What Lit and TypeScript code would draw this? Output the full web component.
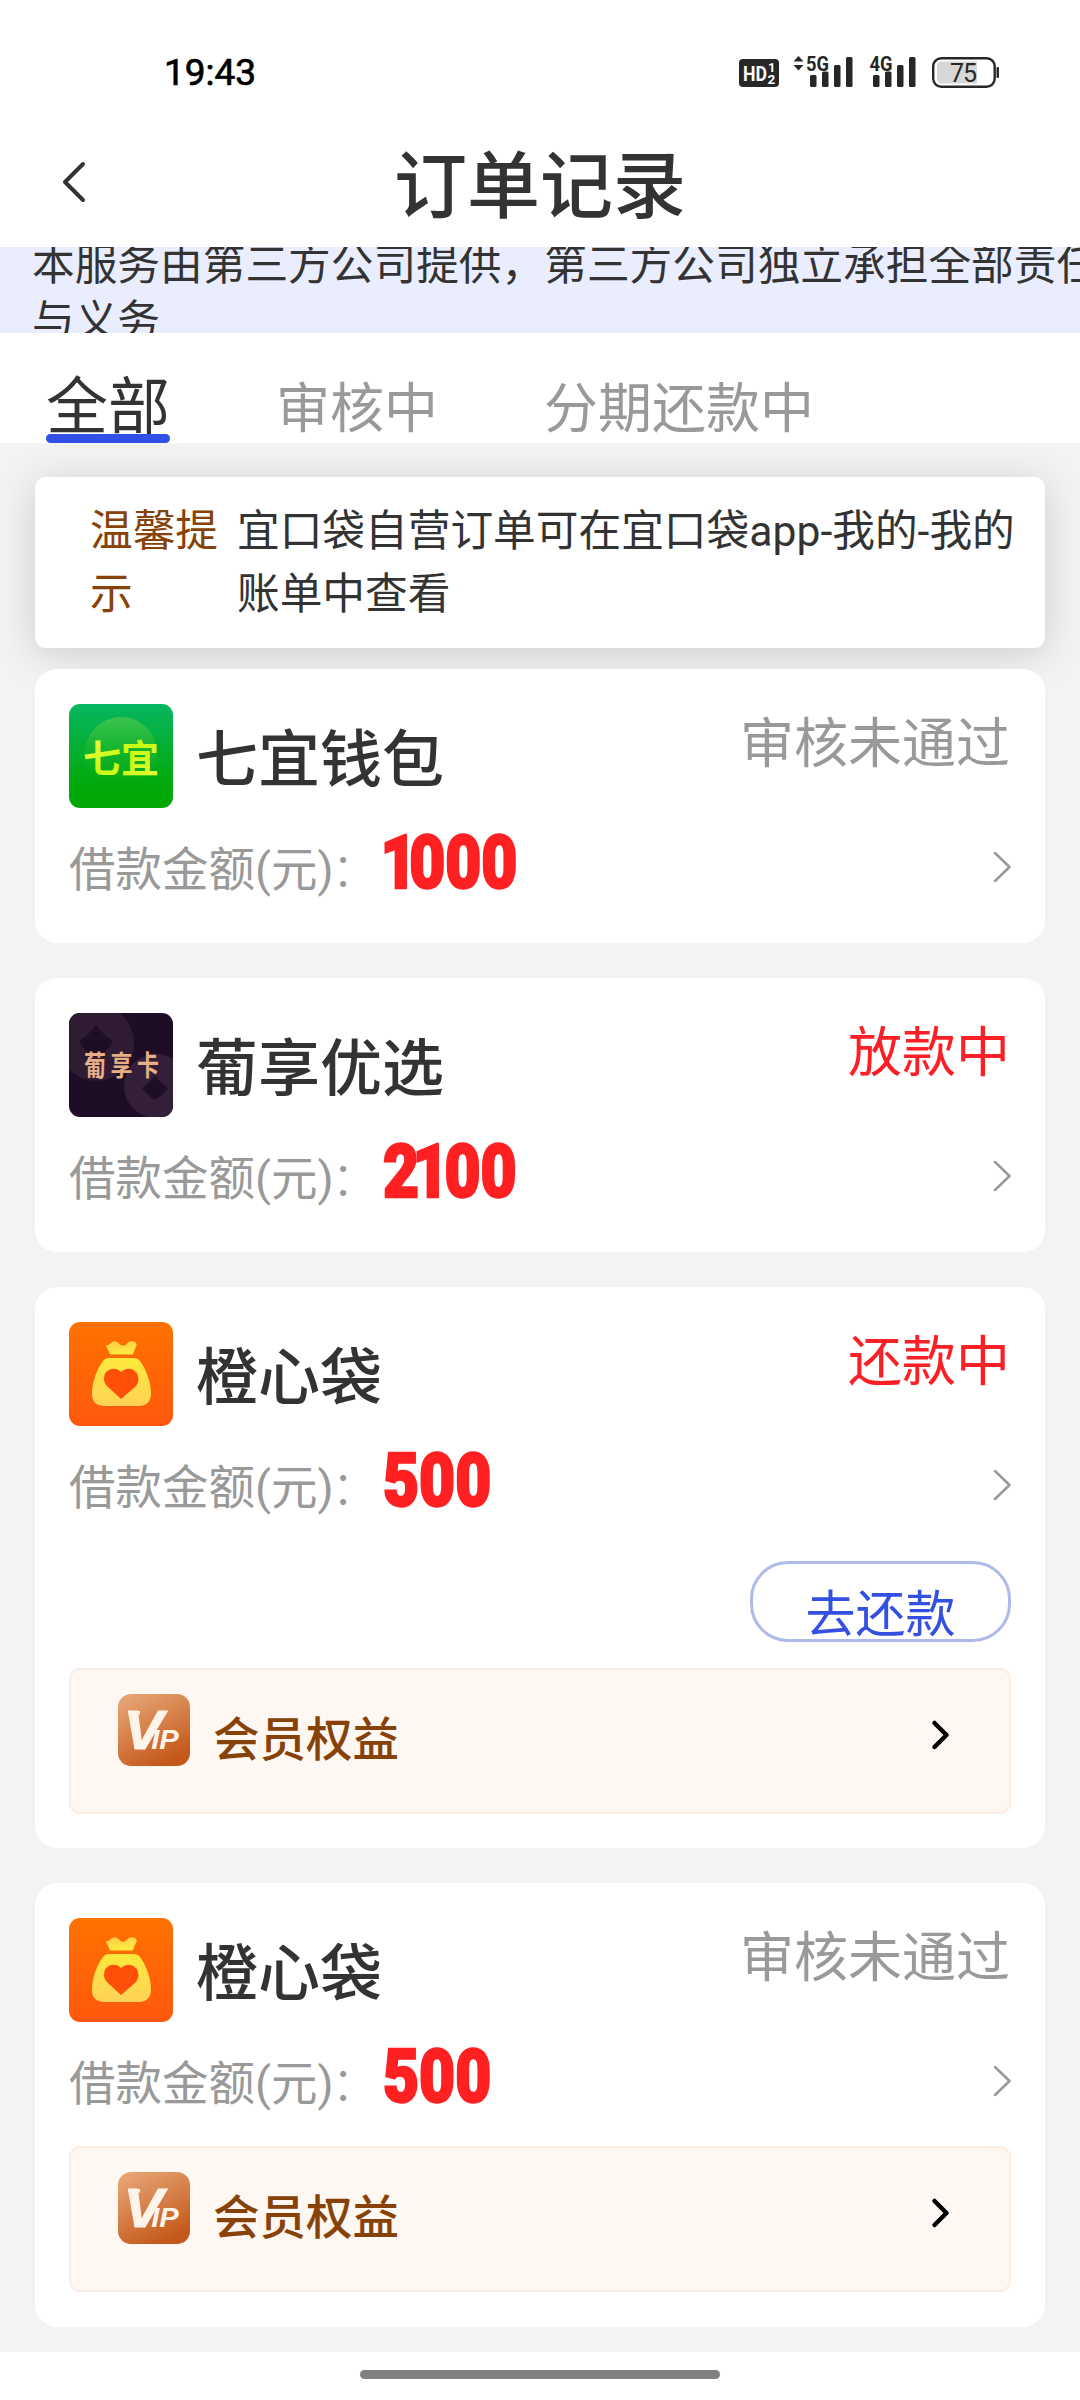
import { LitElement, html, css, svg, nothing } from "lit";
import { customElement, property } from "lit/decorators.js";

type Logo = "qiyi" | "grape" | "bag";

interface Order {
  logo: Logo;
  name: string;
  status: string;
  active: boolean;
  amount: string;
  repay?: boolean;
  vip?: boolean;
}

const ORDERS: Order[] = [
  { logo: "qiyi", name: "七宜钱包", status: "审核未通过", active: false, amount: "1000" },
  { logo: "grape", name: "葡享优选", status: "放款中", active: true, amount: "2100" },
  { logo: "bag", name: "橙心袋", status: "还款中", active: true, amount: "500", repay: true, vip: true },
  { logo: "bag", name: "橙心袋", status: "审核未通过", active: false, amount: "500", vip: true },
];

const LOGOS = {
  qiyi: svg`
    <defs>
      <linearGradient id="g" x1="0" y1="0" x2="0" y2="1">
        <stop offset="0" stop-color="#07b661"/><stop offset=".75" stop-color="#02a90c"/><stop offset="1" stop-color="#01a803"/>
      </linearGradient>
      <linearGradient id="c" x1="0" y1="0" x2="0" y2="1">
        <stop offset="0" stop-color="#3fc34c"/><stop offset=".9" stop-color="#12b010" stop-opacity="0"/>
      </linearGradient>
      <linearGradient id="t" x1="0" y1="0" x2="1" y2="1">
        <stop offset="0" stop-color="#f6f95a"/><stop offset=".5" stop-color="#c8fb12"/><stop offset="1" stop-color="#e6fb3c"/>
      </linearGradient>
    </defs>
    <rect width="104" height="104" fill="url(#g)"/>
    <circle cx="52" cy="49" r="36" fill="url(#c)"/>
    <text x="14" y="68" font-size="38" font-weight="700" textLength="76" fill="url(#t)">七宜</text>`,
  grape: svg`
    <rect width="104" height="104" fill="#1f0d26"/>
    <circle cx="27" cy="30" r="38" fill="#2f1c33"/>
    <path d="M27 12Q34 22 44 28Q40 38 27 44Q14 38 10 28Q20 22 27 12Z" fill="#1f0d26"/>
    <circle cx="87" cy="73" r="32" fill="#331f38"/>
    <path d="M86 62Q91 70 99 75Q94 82 86 87Q78 82 73 75Q81 70 86 62Z" fill="#1f0d26"/>
    <text transform="translate(15 63) scale(1 1.28)" font-size="22" font-weight="700" textLength="75" fill="#e8ae88">葡享卡</text>`,
  bag: svg`
    <defs>
      <linearGradient id="o" x1="0" y1="0" x2="0" y2="1">
        <stop offset="0" stop-color="#ff7200"/><stop offset="1" stop-color="#ff580d"/>
      </linearGradient>
      <linearGradient id="n" x1="0" y1="0" x2=".3" y2="1">
        <stop offset="0" stop-color="#fdc94a"/><stop offset="1" stop-color="#fdec3f"/>
      </linearGradient>
      <linearGradient id="y" x1="0" y1="0" x2="0" y2="1">
        <stop offset="0" stop-color="#fce93b"/><stop offset="1" stop-color="#ffd257"/>
      </linearGradient>
    </defs>
    <rect width="104" height="104" fill="url(#o)"/>
    <path d="M41 32.500Q39 27 36.500 23.500Q39 24 41 21.500Q46 17 50 21.500Q54 26 58 21.500Q60 18.500 65 19.500Q69 21.500 67 25Q65 28 64 32.500Z" fill="url(#n)"/>
    <path d="M40 36H64Q69 36 71 39C77 47 82 60 82 71Q82 84 69 84H36Q23 84 23 72C23 60 28 47 34 39Q36 36 40 36Z" fill="url(#y)"/>
    <path d="M52 77L39 65Q35 61.500 35 57Q35 49 42 47Q48 45.500 52 50Q57 45.500 62 47Q69 49 69.500 57Q69.500 61.500 66 65Z" fill="#ff4f08"/>`,
};

@customElement("status-icons")
class StatusIcons extends LitElement {
  static styles = css`
    :host { display: block; }
    svg { display: block; }
    text { font-family: Roboto, "Liberation Sans", sans-serif; }
  `;

  private bars(x: number) {
    return svg`
      <rect x=${x} y="22" width="6.500" height="12" rx="1.500"/>
      <rect x=${x + 12} y="18.500" width="6.500" height="15.500" rx="1.500"/>
      <rect x=${x + 24} y="12" width="6.500" height="22" rx="1.500"/>
      <rect x=${x + 36} y="4" width="6.500" height="30" rx="1.500"/>`;
  }

  render() {
    return html`
      <svg width="262" height="38" viewBox="0 0 262 38" fill="#272727">
        <rect x="0" y="6" width="40" height="28" rx="4"/>
        <text x="4" y="27.500" font-size="21" font-weight="700" textLength="24" lengthAdjust="spacingAndGlyphs" fill="#fff">HD</text>
        <text x="29" y="19" font-size="13" font-weight="700" fill="#fff">1</text>
        <text x="28.500" y="31" font-size="13.500" font-weight="700" fill="#fff">2</text>
        <path d="M54.500 8.500L59.500 3L64.500 8.500ZM54.500 12L59.500 17.500L64.500 12Z"/>
        <text x="67" y="17.500" font-size="20.500" font-weight="700" textLength="23" lengthAdjust="spacingAndGlyphs">5G</text>
        ${this.bars(71)}
        <text x="130.500" y="17.500" font-size="20.500" font-weight="700" textLength="23" lengthAdjust="spacingAndGlyphs">4G</text>
        ${this.bars(134)}
        <rect x="194.200" y="5.200" width="61.500" height="28.500" rx="8" fill="#fff" stroke="#272727" stroke-width="2.400"/>
        <path d="M203 8.500H238V30.500H203Q198 30.500 198 25.500V13.500Q198 8.500 203 8.500Z" fill="#d7d7d7"/>
        <rect x="257.500" y="14" width="2.500" height="11" rx="1"/>
        <text x="211" y="28.500" font-size="25" textLength="27">75</text>
      </svg>`;
  }
}

@customElement("order-card")
class OrderCard extends LitElement {
  @property({ attribute: false }) order!: Order;

  static styles = css`
    :host {
      display: block;
      background: #fff;
      border-radius: 22px;
      padding: 35px 34px;
      color: #333;
    }
    svg { display: block; flex: none; }
    .head { display: flex; height: 104px; }
    .logo { border-radius: 11px; }
    .name {
      flex: 1;
      margin: 12px 0 0 23px;
      font-size: 62px;
      line-height: 90px;
      font-weight: 500;
    }
    .status { font-size: 54px; line-height: 80px; color: #999; margin: 1px 1px 0 0; }
    .active { color: #fb2025; }
    .money { display: flex; align-items: center; height: 80px; margin-top: 20px; }
    .label { font-size: 46.500px; line-height: 64px; color: #999; width: 314px; white-space: nowrap; margin-top: 3px; }
    .colon { margin-left: -2px; font-weight: 300; }
    .amount {
      flex: 1;
      font-size: 75px;
      line-height: 80px;
      font-weight: 900;
      color: #ff2022;
      -webkit-text-stroke: 2.500px #ff2022;
      transform: scaleX(0.83);
      transform-origin: left;
      margin-top: -13px;
    }
    .one { letter-spacing: -5px; }
    .before-one { letter-spacing: -8px; }
    .one:first-child { margin-left: -3px; letter-spacing: -9px; }
    .money svg { margin-top: -2px; }
    .actions { display: flex; justify-content: flex-end; margin-top: 35px; }
    .repay {
      box-sizing: border-box;
      width: 261px;
      height: 81px;
      border: 3px solid #afbaeb;
      border-radius: 38px;
      font-size: 50px;
      line-height: 70px;
      padding-top: 16px;
      text-align: center;
      color: #3350e0;
    }
    .vip {
      box-sizing: border-box;
      display: flex;
      align-items: flex-start;
      height: 146px;
      margin-top: 24px;
      border: 2px solid #fbeee5;
      border-radius: 11px;
      background: #fff7f1;
      padding: 24px 59px 0 47px;
    }
    .actions + .vip { margin-top: 26px; margin-bottom: -1px; }
    .benefit { flex: 1; margin: 14px 0 0 23px; font-size: 46.500px; line-height: 64px; font-weight: 500; color: #864208; }
    .go { margin-top: 24px; }
    text { font-family: "Noto Sans CJK SC", sans-serif; }
    .mark { font-family: "Liberation Sans", sans-serif; font-weight: 700; font-style: italic; }
    .v { letter-spacing: -11px; }
  `;

  render() {
    const o = this.order;
    const digits = [...o.amount];
    return html`
      <div class="head">
        <svg class="logo" width="104" height="104" viewBox="0 0 104 104">${LOGOS[o.logo]}</svg>
        <div class="name">${o.name}</div>
        <div class="status ${o.active ? "active" : ""}">${o.status}</div>
      </div>
      <div class="money">
        <div class="label">借款金额(元)<span class="colon">：</span></div>
        <div class="amount">${digits.map(
          (d, i) => html`<span class=${d === "1" ? "one" : digits[i + 1] === "1" ? "before-one" : ""}>${d}</span>`
        )}</div>
        <svg width="18" height="32" viewBox="0 0 18 32" fill="none" stroke="#999" stroke-width="2.500" stroke-linecap="round" stroke-linejoin="round">
          <path d="M2 2L16.500 16L2 30"/>
        </svg>
      </div>
      ${o.repay ? html`<div class="actions"><div class="repay">去还款</div></div>` : nothing}
      ${o.vip ? this.vip() : nothing}`;
  }

  private vip() {
    return html`
      <div class="vip">
        <svg width="72" height="72" viewBox="0 0 72 72">
          <defs>
            <linearGradient id="v" x1=".1" y1="0" x2=".6" y2="1">
              <stop offset="0" stop-color="#e8a878"/><stop offset="1" stop-color="#c4581a"/>
            </linearGradient>
          </defs>
          <rect width="72" height="72" rx="13" fill="url(#v)"/>
          <path d="M11.500 17H22V20.500H14.500Q13.500 18 11.500 17Z" fill="#fff4ea"/>
          <text class="mark" transform="translate(5.500 55) scale(1.08 1)" font-size="55" fill="#fff4ea"><tspan class="v" stroke="#fff4ea" stroke-width="1">V</tspan><tspan font-size="27">IP</tspan></text>
        </svg>
        <div class="benefit">会员权益</div>
        <svg class="go" width="20" height="34" viewBox="0 0 20 34" fill="none" stroke="#000" stroke-width="4.500" stroke-linecap="round" stroke-linejoin="round">
          <path d="M4.500 5L16.500 17L4.500 29"/>
        </svg>
      </div>`;
  }
}

@customElement("app-root")
class AppRoot extends LitElement {
  static styles = css`
    :host {
      display: flex;
      flex-direction: column;
      width: 1080px;
      height: 2400px;
      overflow: hidden;
      background: #fff;
      color: #333;
      font-family: Roboto, "Noto Sans CJK SC", sans-serif;
    }
    .statusbar {
      display: flex;
      justify-content: space-between;
      height: 67px;
      padding: 53px 79px 0 164px;
    }
    .time { font-size: 37px; line-height: 40px; color: #000; -webkit-text-stroke: 0.700px #000; }
    .titlebar { display: grid; grid-template-columns: 180px 1fr 180px; height: 127px; }
    .back { margin: 40px 0 0 60px; }
    .title { text-align: center; font-size: 73px; line-height: 110px; font-weight: 500; padding-top: 12px; }
    .notice {
      height: 86px;
      overflow: hidden;
      background: #e9edfd;
      font-size: 42.700px;
      line-height: 56px;
      white-space: nowrap;
    }
    .lines { margin: -10px 0 0 32px; }
    .tabs { display: flex; align-items: flex-end; height: 110px; padding-left: 46px; }
    .tab { font-size: 54px; line-height: 68px; height: 70px; padding-top: 3px; box-sizing: border-box; color: #999; margin-right: 106px; }
    .current {
      font-size: 62px;
      line-height: 76px;
      height: 76px;
      padding-top: 3px;
      color: #333;
      position: relative;
    }
    .current::after {
      content: "";
      position: absolute;
      left: 0;
      right: 0;
      bottom: 0;
      height: 9px;
      border-radius: 5px;
      background: #3250e8;
    }
    .list {
      display: flex;
      flex-direction: column;
      gap: 35px;
      height: 1875px;
      padding: 34px 35px 0;
      background: #f3f3f3;
      overflow: hidden;
    }
    .tip {
      box-sizing: border-box;
      display: flex;
      flex: none;
      height: 171px;
      margin-bottom: -14px;
      padding: 23px 20px 0 55px;
      border-radius: 11px;
      background: #fff;
      box-shadow: 0 6px 40px rgba(0, 0, 0, 0.16);
      font-size: 42.700px;
      line-height: 63px;
    }
    .tiplabel { width: 130px; margin-right: 17px; color: #864208; flex: none; }
    order-card { flex: none; position: relative; }
    .nav { height: 48px; display: flex; justify-content: center; padding-top: 18px; box-sizing: border-box; background: #fff; }
    .pill { width: 360px; height: 9px; border-radius: 5px; background: #808080; }
  `;

  render() {
    return html`
      <div class="statusbar">
        <div class="time">19:43</div>
        <status-icons></status-icons>
      </div>
      <div class="titlebar">
        <svg class="back" width="28" height="44" viewBox="0 0 28 44" fill="none" stroke="#333" stroke-width="4" stroke-linecap="round" stroke-linejoin="round">
          <path d="M23 4L5 22L23 40"/>
        </svg>
        <div class="title">订单记录</div>
      </div>
      <div class="notice">
        <div class="lines">本服务由第三方公司提供，第三方公司独立承担全部责任<br />与义务</div>
      </div>
      <div class="tabs">
        <div class="tab current">全部</div>
        <div class="tab">审核中</div>
        <div class="tab">分期还款中</div>
      </div>
      <div class="list">
        <div class="tip">
          <div class="tiplabel">温馨提示</div>
          <div>宜口袋自营订单可在宜口袋app-我的-我的账单中查看</div>
        </div>
        ${ORDERS.map((o) => html`<order-card .order=${o}></order-card>`)}
      </div>
      <div class="nav"><div class="pill"></div></div>`;
  }
}
